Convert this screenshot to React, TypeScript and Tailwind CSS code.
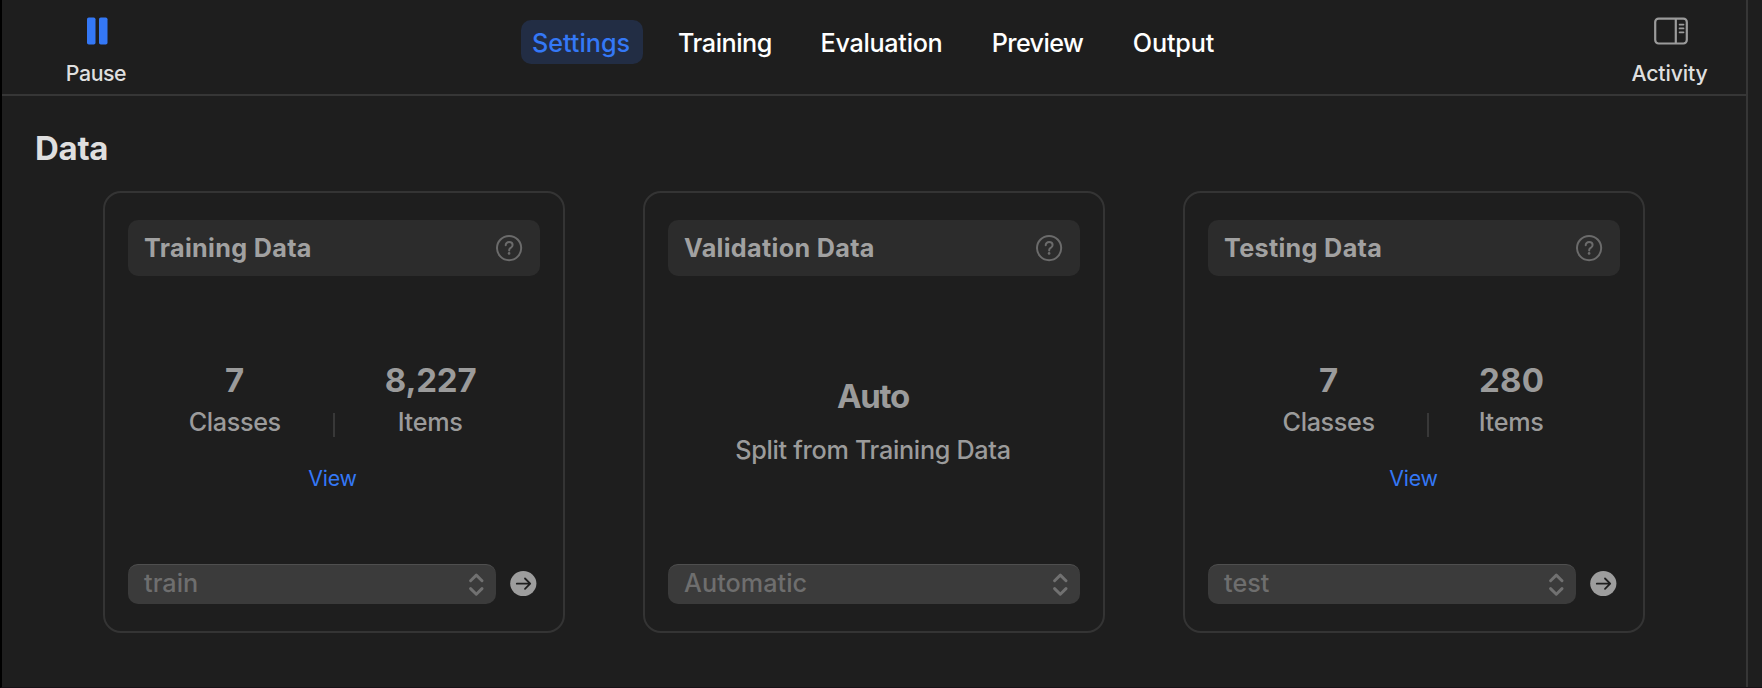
import React from 'react';

function PauseIcon() {
  return (
    <svg width="21" height="28" viewBox="0 0 21 28" fill="#3478f6">
      <rect x="0" y="0.4" width="8.5" height="27.2" rx="1.8" />
      <rect x="12" y="0.4" width="8.5" height="27.2" rx="1.8" />
    </svg>
  );
}

function ActivityIcon() {
  return (
    <svg width="34" height="28" viewBox="0 0 34 28" fill="none" stroke="#9b9b9b" strokeWidth="2.2">
      <rect x="1.2" y="1.6" width="31.6" height="24.9" rx="3.4" />
      <path d="M21.8 1.6V26.5" />
      <path d="M25.6 7.6h3.9M25.6 11.4h3.9M25.6 15.3h3.9" strokeWidth="1.8" strokeLinecap="round" />
    </svg>
  );
}

function HelpIcon() {
  return (
    <svg width="27" height="27" viewBox="0 0 27 27" fill="none" stroke="#6b6b6b" strokeLinecap="round" strokeLinejoin="round">
      <circle cx="13.1" cy="13.1" r="12.1" strokeWidth="2" />
      <path d="M9.7 10.2c0-1.8 1.4-3.1 3.4-3.1 2 0 3.5 1.2 3.5 3 0 1.2-.7 1.9-1.7 2.6-1.2.8-1.7 1.4-1.7 2.4v.4" strokeWidth="2" />
      <circle cx="13.1" cy="18.4" r="1.35" fill="#6b6b6b" stroke="none" />
    </svg>
  );
}

function ChevronsIcon() {
  return (
    <svg width="15" height="24" viewBox="0 0 15 24" fill="none" stroke="#717171" strokeWidth="2.9" strokeLinecap="round" strokeLinejoin="round">
      <path d="M1.6 7.8 7.3 2.1 13 7.8" />
      <path d="M1.6 15.6 7.3 21.3 13 15.6" />
    </svg>
  );
}

function ArrowIcon() {
  return (
    <svg width="27" height="26" viewBox="0 0 27 26" fill="none">
      <ellipse cx="13.3" cy="12.6" rx="13.1" ry="12.5" fill="#9d9d9d" />
      <path d="M6.8 12.7h13.2M15 7.5l5.2 5.2-5.2 5.2" stroke="#1e1e1e" strokeWidth="1.8" strokeLinecap="round" strokeLinejoin="round" />
    </svg>
  );
}

function Stats({ items, className, itemsClass }: { items: string; className: string; itemsClass: string }) {
  return (
    <div className={`flex flex-col items-center pt-[84px] ${className}`}>
      <div className="flex items-end">
        <div className="flex flex-col items-center gap-1.5">
          <span className="text-[33px] leading-10 font-bold">7</span>
          <span className="text-[25.2px] leading-8 font-[450] tracking-[-0.35px]">Classes</span>
        </div>
        <div className="mr-[50px] mb-px ml-[52px] h-6 w-0.5 bg-[#383838]" />
        <div className="flex flex-col items-center gap-1.5">
          <span className={`text-[33px] leading-10 font-bold ${itemsClass}`}>{items}</span>
          <span className="pr-px text-[25.2px] leading-8 font-[450] tracking-[-0.3px]">Items</span>
        </div>
      </div>
      <a className="mt-[26px] text-[21.3px] leading-7 tracking-[-0.25px] text-[#3478f6]">View</a>
    </div>
  );
}

function Card({ title, value, arrow, children }: { title: string; value: string; arrow?: boolean; children: React.ReactNode }) {
  return (
    <section className="flex h-[442px] w-[462px] flex-col rounded-[18px] border-2 border-[#343434] px-[23px] py-[27px] text-[#9b9b9b]">
      <header className="flex h-14 shrink-0 items-center justify-between rounded-[10px] bg-[#2c2c2c] pr-[17px] pl-4">
        <h2 className="text-[25.2px] leading-8 font-bold tracking-[0.32px] text-[#a1a1a1]">{title}</h2>
        <HelpIcon />
      </header>
      <div className="flex-1">{children}</div>
      <div className="flex items-center gap-3.5">
        <div className="flex h-10 flex-1 items-center justify-between rounded-[10px] border-t border-[#4f4f4f] bg-[#3b3b3b] pr-3 pl-4">
          <span className="pb-[3px] text-[25.2px] leading-8 font-[450] tracking-[0.06px] text-[#6e6e6e]">{value}</span>
          <ChevronsIcon />
        </div>
        {arrow && <div className="w-[30px]"><ArrowIcon /></div>}
      </div>
    </section>
  );
}

const tabs = [
  { label: 'Settings', style: 'w-[122px] rounded-[10px] bg-[#222d44] pr-[2px] font-[450] text-[#3478f6]' },
  { label: 'Training', style: 'w-[116px] font-medium tracking-[-0.46px]' },
  { label: 'Evaluation', style: 'w-[150px] pr-px font-medium tracking-[-0.3px]' },
  { label: 'Preview', style: 'w-[114px] pr-px font-medium tracking-[-0.6px]' },
  { label: 'Output', style: 'w-[110px] pr-px font-medium tracking-[-0.15px]' },
];

export default function App() {
  return (
    <div className="flex h-[688px] w-[1762px] overflow-hidden border-b border-l-2 border-b-[#171217] border-l-black bg-[#1e1e1e] font-['Inter',sans-serif]">
      <main className="w-[1746px] shrink-0 border-r-2 border-[#363636]">
        <div className="flex h-24 border-b-2 border-[#363636] pr-[34px] pl-[60px] text-white">
          <button className="flex w-[70px] flex-col items-center pt-[17px] text-[21.3px] leading-7 font-medium tracking-[-0.4px] text-[#dfdfdf]">
            <PauseIcon />
            <span className="mt-[14px] pr-[2px]">Pause</span>
          </button>
          <nav className="ml-[389px] flex gap-6 pt-5">
            {tabs.map((t) => (
              <button key={t.label} className={`h-11 pt-px text-center text-[25.2px] leading-8 ${t.style}`}>
                {t.label}
              </button>
            ))}
          </nav>
          <button className="ml-auto flex w-[84px] flex-col items-center pt-[17px] text-[21.3px] leading-7 font-medium tracking-[-0.16px] text-[#dfdfdf]">
            <span className="pl-[2px]"><ActivityIcon /></span>
            <span className="mt-[14px] pr-px">Activity</span>
          </button>
        </div>
        <h1 className="pt-8 pl-[33px] text-[33px] leading-10 font-bold tracking-[-0.3px] text-[#dfdfdf]">Data</h1>
        <div className="mt-[23px] ml-[101px] flex gap-[78px]">
          <Card title="Training Data" value="train" arrow>
            <Stats items="8,227" className="pr-[3px]" itemsClass="tracking-[-0.2px]" />
          </Card>
          <Card title="Validation Data" value="Automatic">
            <div className="flex flex-col items-center pt-[100px] pr-[2px]">
              <span className="text-[33px] leading-10 font-bold tracking-[-1.3px]">Auto</span>
              <span className="mt-[18px] text-[25.2px] leading-8 font-[450] tracking-[-0.3px]">Split from Training Data</span>
            </div>
          </Card>
          <Card title="Testing Data" value="test" arrow>
            <Stats items="280" className="pr-px" itemsClass="tracking-[0.3px]" />
          </Card>
        </div>
      </main>
    </div>
  );
}
